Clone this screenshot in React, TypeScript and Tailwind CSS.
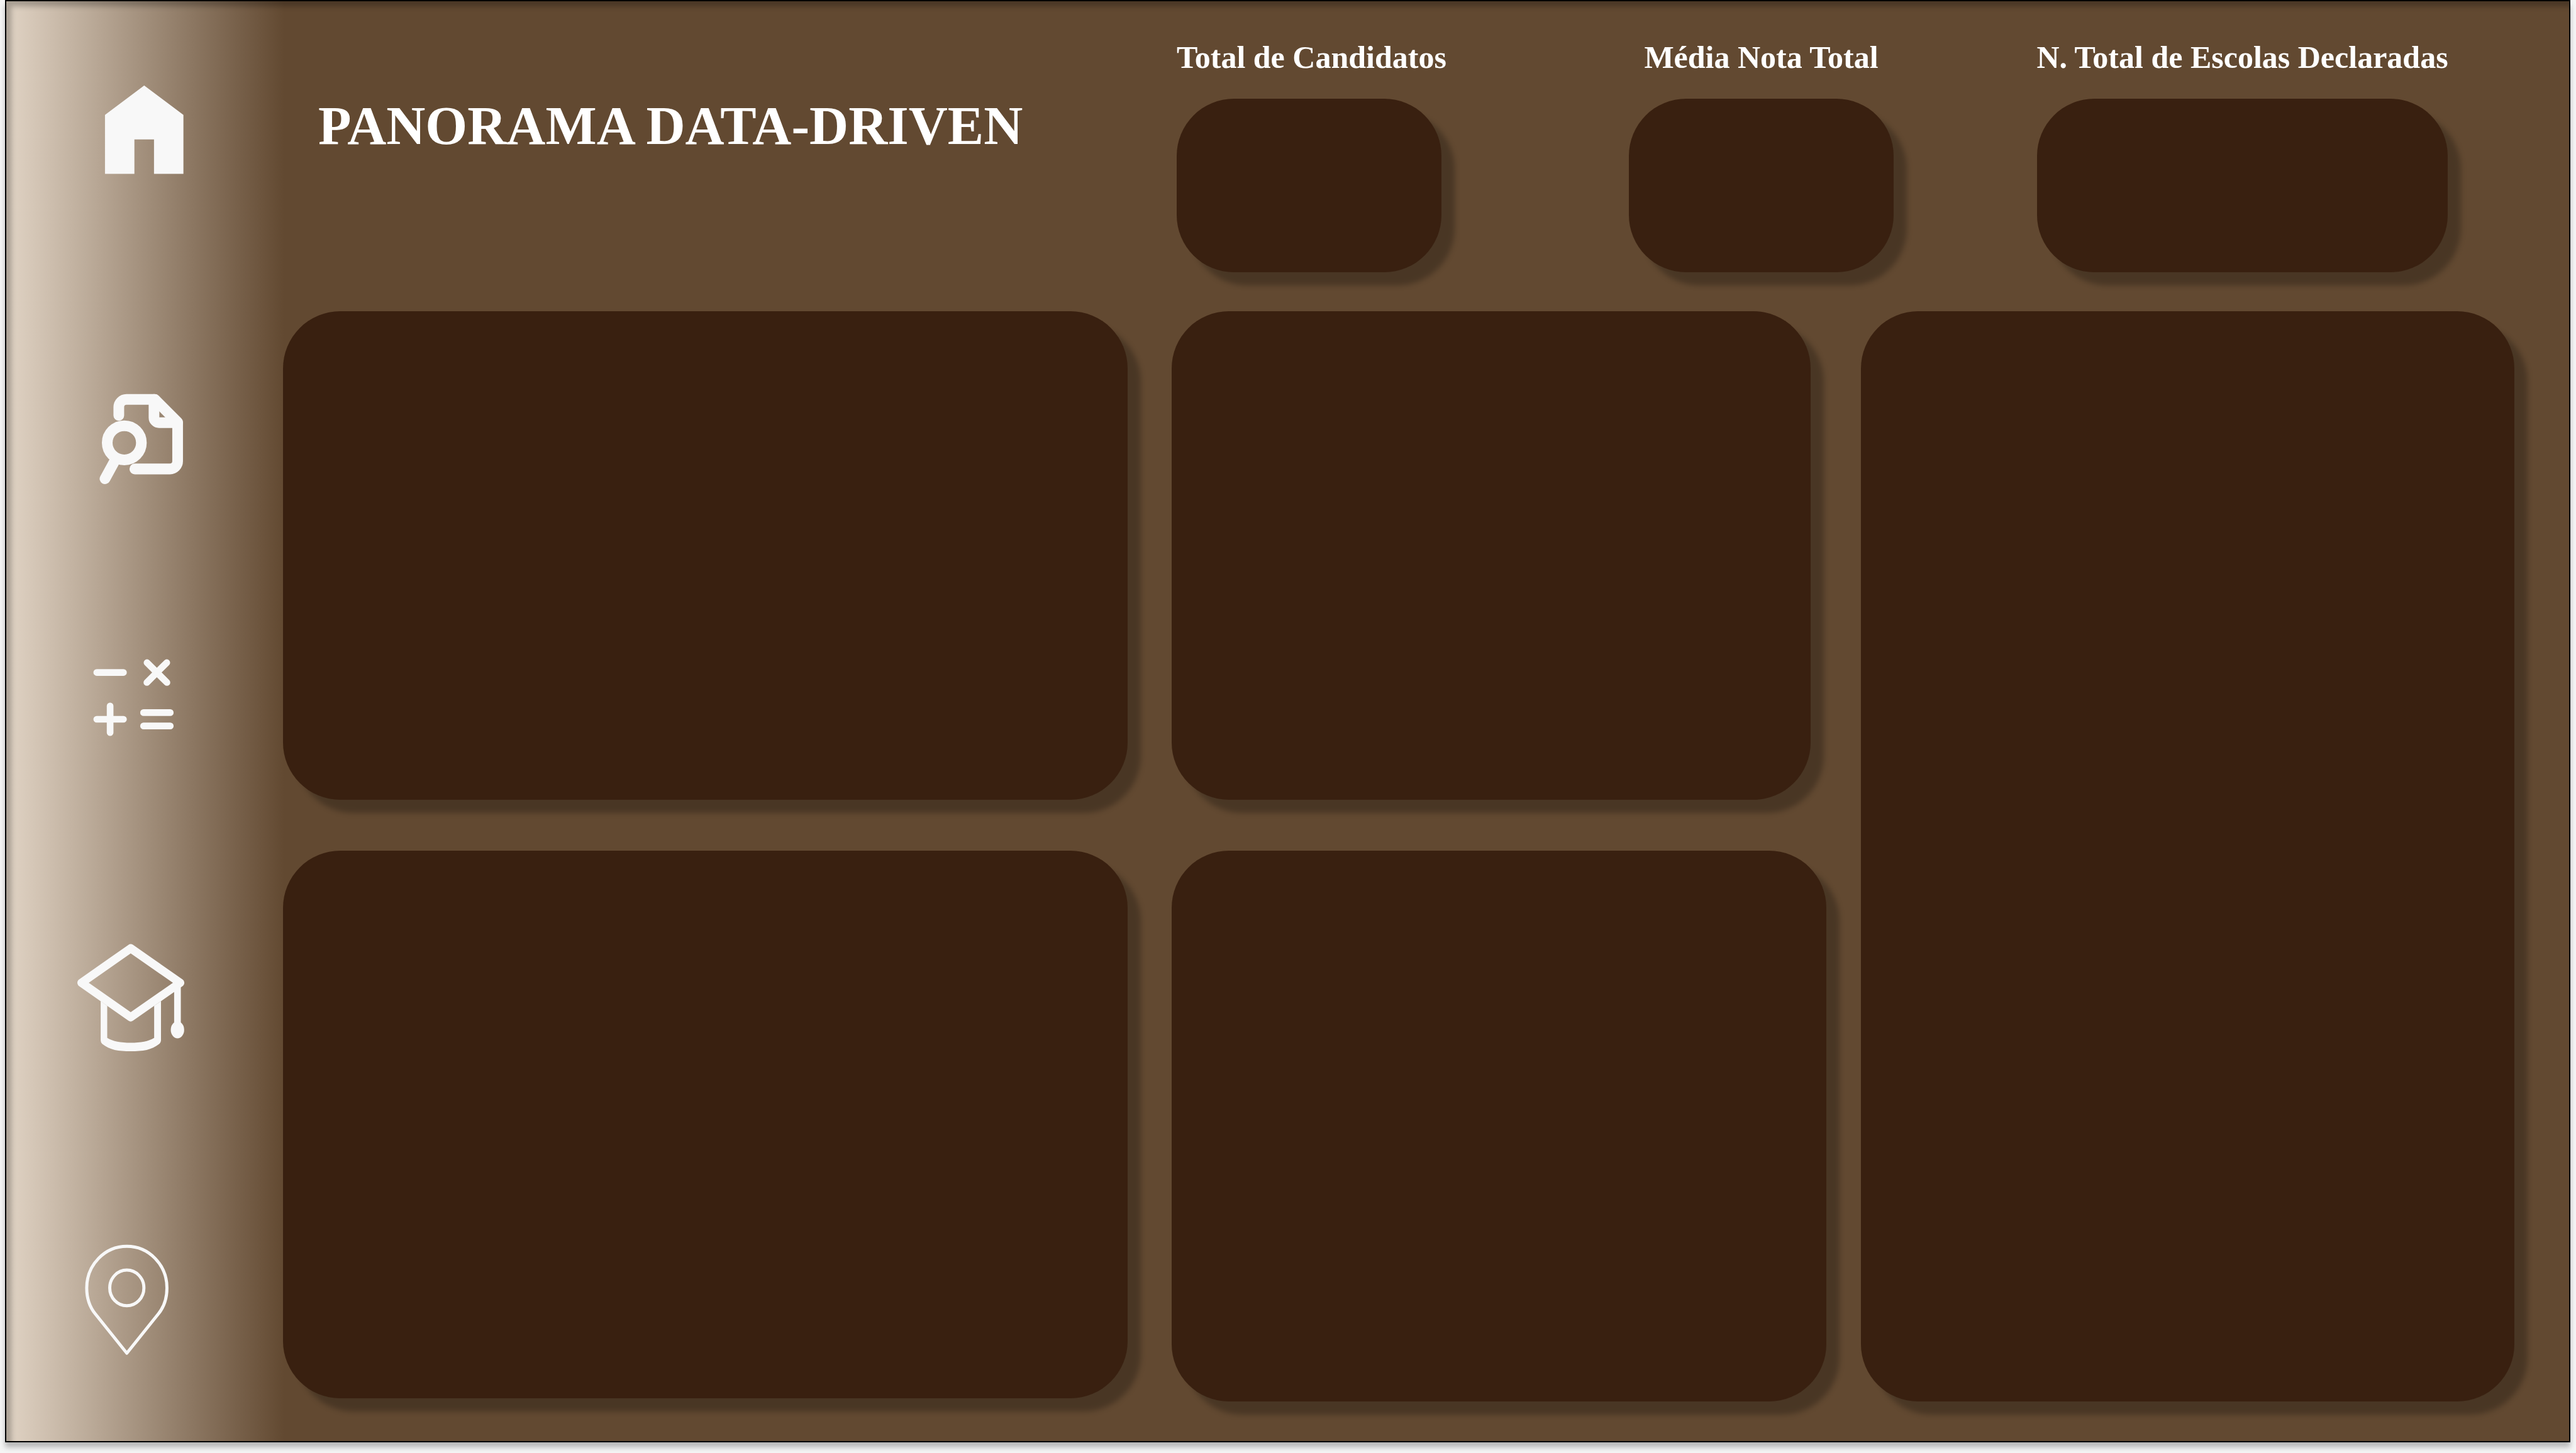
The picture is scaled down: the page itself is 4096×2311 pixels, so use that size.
import type { ReactNode } from "react";

type NavItem = { label: string; className: string; viewBox: string; drawing: ReactNode };

const navItems: NavItem[] = [
  {
    label: "Início",
    className: "mt-[80px]",
    viewBox: "0 -43 1050 1050",
    drawing: <path fill="currentColor" d="M258 780V384L522 186L786 384V780H588V549H456V780Z" />,
  },
  {
    label: "Pesquisar documento",
    className: "mt-[247px]",
    viewBox: "0 -46 1050 1050",
    drawing: (
      <g fill="none" stroke="currentColor" strokeWidth="72" strokeLinecap="round" strokeLinejoin="round">
        <path d="M351 309V253A52 52 0 0 1 403 201H594L747 354V617A52 52 0 0 1 695 669H459" />
        <path d="M588 201V323A34 34 0 0 0 622 357H747" />
        <circle cx="388" cy="493" r="115" />
        <path d="M318 625L258 735" />
      </g>
    ),
  },
  {
    label: "Cálculos",
    className: "mt-[163px]",
    viewBox: "0 -134 1050 1050",
    drawing: (
      <g fill="none" stroke="currentColor" strokeWidth="45" strokeLinecap="round">
        <path d="M202.500 211.500H382.500M541 145L675 279M674 145L540 279" />
        <path d="M202.500 526.500H382.500M292.500 436.500V616.500M517.500 481.500H697.500M517.500 571.500H697.500" />
      </g>
    ),
  },
  {
    label: "Escolas",
    className: "mt-[226px]",
    viewBox: "60 -46 1050 1050",
    drawing: (
      <>
        <path
          fill="none"
          stroke="currentColor"
          strokeWidth="56"
          strokeLinejoin="round"
          d="M491 150L824 382L491 614L160 382Z"
        />
        <path
          fill="currentColor"
          d="M289 505V770Q289 782 299 793C350 835 410 843 491 843S632 835 684 793Q695 782 695 770V505L649 537V753C610 777 560 786 491 786S372 777 333 753V537Z"
        />
        <path fill="none" stroke="currentColor" strokeWidth="45" d="M806 395V670" />
        <ellipse cx="806" cy="699" rx="45" ry="57" fill="currentColor" />
      </>
    ),
  },
  {
    label: "Localização",
    className: "mt-[234px]",
    viewBox: "60 -15 1050 1050",
    drawing: (
      <g fill="none" stroke="currentColor" strokeWidth="21" strokeLinejoin="round">
        <path d="M465 867L252 601C215 555 195 495 195 427C195 272 316 147 465 147S735 272 735 427C735 495 715 555 678 601Z" />
        <ellipse cx="465" cy="427" rx="115" ry="120" />
      </g>
    ),
  },
];

const surface = "rounded-[91px] bg-[#392010] shadow-[21px_21px_8px_rgba(0,0,0,0.25)]";

function Panel({ className, label }: { className: string; label: string }) {
  return <section aria-label={label} className={`${surface} ${className}`} />;
}

function Stat({ title, className, align }: { title: string; className: string; align: string }) {
  return (
    <section className={`flex shrink-0 flex-col gap-[34px] ${align} ${className}`}>
      <h2 className="whitespace-nowrap text-[50px] leading-[64px] font-bold">{title}</h2>
      <div className={`h-[276px] w-full ${surface}`} />
    </section>
  );
}

export default function App() {
  return (
    <div className="min-h-screen bg-[#f5f5f5] font-['Liberation_Serif',serif] text-white">
      <div className="mr-[9px] ml-[8px] flex border-2 border-black bg-[linear-gradient(90deg,#e1d4c5_0px,#624931_442px)] pr-[87px] pb-[63px] shadow-[0_8px_8px_rgba(0,0,0,0.25),inset_8px_8px_8px_rgba(0,0,0,0.25)]">
        <nav aria-label="Principal" className="flex w-[440px] shrink-0 flex-col pl-[96px] text-[#f8f8f8]">
          {navItems.map((item) => (
            <a key={item.label} href="#" aria-label={item.label} className={`block size-[248px] ${item.className}`}>
              <svg viewBox={item.viewBox} className="size-full" aria-hidden="true">
                {item.drawing}
              </svg>
            </a>
          ))}
        </nav>

        <div className="flex min-w-0 flex-1 flex-col">
          <header className="flex pt-[57px] pb-[62px]">
            <h1 className="min-w-0 flex-1 pt-[89px] pl-14 whitespace-nowrap text-[86px] leading-[104px] font-bold">
              PANORAMA DATA-DRIVEN
            </h1>
            <div className="mr-[106px] flex">
              <Stat title="Total de Candidatos" className="mr-[298px] w-[421px]" align="items-start" />
              <Stat title="Média Nota Total" className="mr-[228px] w-[421px]" align="items-center" />
              <Stat title="N. Total de Escolas Declaradas" className="w-[653px]" align="items-center" />
            </div>
          </header>

          <main className="flex">
            <div className="mr-[70px] flex flex-[1343] flex-col gap-[81px]">
              <Panel label="Painel 1" className="h-[777px]" />
              <Panel label="Painel 2" className="h-[871px]" />
            </div>
            <div className="mr-[55px] flex flex-[1041] flex-col gap-[81px]">
              <Panel label="Painel 3" className="mr-[25px] h-[777px]" />
              <Panel label="Painel 4" className="h-[876px]" />
            </div>
            <Panel label="Painel 5" className="flex-[1039]" />
          </main>
        </div>
      </div>
    </div>
  );
}
